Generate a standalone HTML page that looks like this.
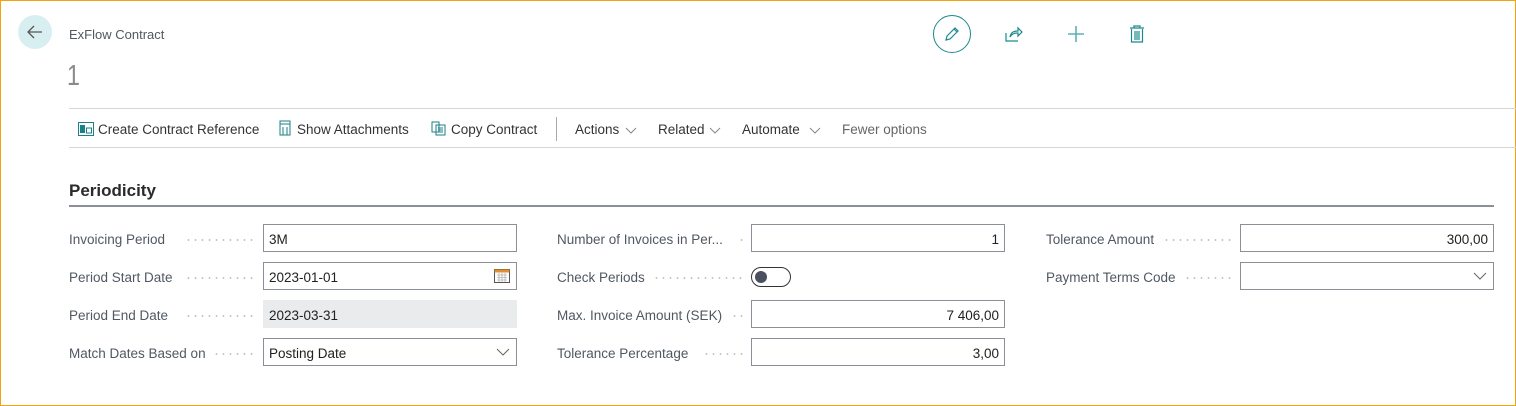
<!DOCTYPE html><html><head><style>
*{box-sizing:border-box;margin:0;padding:0}
body{width:1516px;height:406px;overflow:hidden;background:#fff;font-family:"Liberation Sans",sans-serif;position:relative}
.frame{position:absolute;left:0;top:0;width:1516px;height:406px;border:1px solid #f0a30a;}
.a{position:absolute;white-space:nowrap}
.lbl{font-size:13.5px;color:#505862}
.dots{position:absolute;height:2px;background-image:radial-gradient(circle,#c4c4c4 0.8px,transparent 1px);background-size:7px 2px;background-repeat:repeat-x}
.in{position:absolute;height:28px;border:1px solid #8a8f98;background:#fff;font-size:13.5px;color:#212121;padding:7px 5px 0;}
.tb{font-size:13.5px;color:#333;top:122px}
.hl{position:absolute;height:1px;background:#d6d6d6}
.chev{position:absolute;top:127px}
</style></head><body>
<div class="frame"></div>
<div class="a" style="left:18px;top:15px;width:34px;height:34px;border-radius:50%;background:#d8eff1"></div>
<svg class="a" style="left:25px;top:22px" width="20" height="20" viewBox="0 0 20 20"><path d="M17 10H3M9 4L3 10L9 16" stroke="#555" stroke-width="1.3" fill="none"/></svg>
<div class="a" style="left:69px;top:27px;font-size:13px;color:#505862">ExFlow Contract</div>
<div class="a" style="left:67px;top:60px;font-size:29px;font-weight:normal;color:#8a8a8a;transform:scaleX(0.8);transform-origin:left">1</div>
<div class="a" style="left:933px;top:15px;width:38px;height:38px;border:1.3px solid #1a8a8f;border-radius:50%"></div>
<svg class="a" style="left:942px;top:24px" width="20" height="20" viewBox="0 0 20 20"><path d="M4 16L5 12L13 4L16 7L8 15Z M12 5L15 8" stroke="#1a8a8f" stroke-width="1.2" fill="none"/></svg>
<svg class="a" style="left:1004px;top:24px" width="20" height="20" viewBox="0 0 20 20"><path d="M2 9V17H14M6 13C7 8 10 7 14 7V4L18 8L14 12V9C10 9 8 10 6 13Z" stroke="#1a8a8f" stroke-width="1.2" fill="none"/></svg>
<svg class="a" style="left:1066px;top:24px" width="20" height="20" viewBox="0 0 20 20"><path d="M10 2V18M2 10H18" stroke="#5fb0b5" stroke-width="1.6"/></svg>
<svg class="a" style="left:1128px;top:24px" width="18" height="20" viewBox="0 0 18 20"><path d="M2 4H16M6 4V2H12V4M3.5 5V18H14.5V5M7 7V16M9 7V16M11 7V16" stroke="#1a8a8f" stroke-width="1.2" fill="none"/></svg>
<div class="hl" style="left:69px;top:108px;width:1447px"></div>
<div class="hl" style="left:69px;top:147px;width:1447px"></div>
<svg class="a" style="left:78px;top:122px" width="16" height="14" viewBox="0 0 16 14"><rect x="0.5" y="0.5" width="15" height="13" stroke="#1a7f86" fill="none"/><rect x="2" y="3" width="5" height="8" fill="#1a7f86"/><rect x="8.5" y="6" width="5" height="5" stroke="#1a7f86" fill="none"/></svg>
<div class="a tb" style="left:98px">Create Contract Reference</div>
<svg class="a" style="left:279px;top:120px" width="12" height="16" viewBox="0 0 12 16"><path d="M1 1H11V15H1Z M1 4H11 M4 7V15 M8 7V15" stroke="#1a7f86" fill="none"/></svg>
<div class="a tb" style="left:297px">Show Attachments</div>
<svg class="a" style="left:431px;top:121px" width="16" height="15" viewBox="0 0 16 15"><path d="M1 1H8V11H1Z M5 4H14V14H5Z M7 7H12M7 9H12M7 11H12" stroke="#1a7f86" fill="#fff"/></svg>
<div class="a tb" style="left:451px">Copy Contract</div>
<div class="a" style="left:556px;top:117px;width:1px;height:24px;background:#aaa"></div>
<div class="a tb" style="left:575px">Actions</div>
<svg class="chev" style="left:625px" width="12" height="7" viewBox="0 0 12 7"><path d="M1 1L6 6L11 1" stroke="#888" fill="none"/></svg>
<div class="a tb" style="left:658px">Related</div>
<svg class="chev" style="left:709px" width="12" height="7" viewBox="0 0 12 7"><path d="M1 1L6 6L11 1" stroke="#888" fill="none"/></svg>
<div class="a tb" style="left:742px">Automate</div>
<svg class="chev" style="left:809px" width="12" height="7" viewBox="0 0 12 7"><path d="M1 1L6 6L11 1" stroke="#888" fill="none"/></svg>
<div class="a tb" style="left:842px;color:#666">Fewer options</div>
<div class="a" style="left:69px;top:181px;font-size:17px;font-weight:bold;color:#2b2b2b">Periodicity</div>
<div class="a" style="left:69px;top:205px;width:1425px;height:2px;background:#8a8f98"></div>

<div class="a lbl" style="left:69px;top:232px">Invoicing Period</div><div class="dots" style="left:185px;top:239px;width:70px"></div>
<div class="in" style="left:263px;top:224px;width:254px">3M</div>
<div class="a lbl" style="left:69px;top:270px">Period Start Date</div><div class="dots" style="left:185px;top:277px;width:70px"></div>
<div class="in" style="left:263px;top:262px;width:254px">2023-01-01</div>
<svg class="a" style="left:494px;top:269px" width="16" height="14" viewBox="0 0 16 14"><rect x="0.5" y="0.5" width="15" height="13" stroke="#555" fill="none"/><rect x="0.5" y="0.5" width="15" height="3" fill="#e09030"/><path d="M3 6H13M3 8.5H13M3 11H13M5 4V13M8 4V13M11 4V13" stroke="#999" stroke-width="0.6"/></svg>
<div class="a lbl" style="left:69px;top:308px">Period End Date</div><div class="dots" style="left:185px;top:315px;width:70px"></div>
<div class="in" style="left:263px;top:300px;width:254px;background:#eaebec;border-color:#eaebec">2023-03-31</div>
<div class="a lbl" style="left:69px;top:346px">Match Dates Based on</div><div class="dots" style="left:213px;top:353px;width:42px"></div>
<div class="in" style="left:263px;top:338px;width:254px">Posting Date</div>
<svg class="a" style="left:496px;top:348px" width="14" height="8" viewBox="0 0 14 8"><path d="M1 1L7 7L13 1" stroke="#666" fill="none"/></svg>

<div class="a lbl" style="left:557px;top:232px">Number of Invoices in Per...</div><div class="dots" style="left:738px;top:239px;width:6px"></div>
<div class="in" style="left:751px;top:224px;width:254px;text-align:right">1</div>
<div class="a lbl" style="left:557px;top:270px">Check Periods</div><div class="dots" style="left:653px;top:277px;width:91px"></div>
<div class="a" style="left:751px;top:267px;width:40px;height:20px;border:1.3px solid #333;border-radius:10px"></div>
<div class="a" style="left:755px;top:271px;width:12px;height:12px;border-radius:50%;background:#4a5060"></div>
<div class="a lbl" style="left:557px;top:308px">Max. Invoice Amount (SEK)</div><div class="dots" style="left:731px;top:315px;width:13px"></div>
<div class="in" style="left:751px;top:300px;width:254px;text-align:right">7 406,00</div>
<div class="a lbl" style="left:557px;top:346px">Tolerance Percentage</div><div class="dots" style="left:703px;top:353px;width:41px"></div>
<div class="in" style="left:751px;top:338px;width:254px;text-align:right">3,00</div>

<div class="a lbl" style="left:1046px;top:232px">Tolerance Amount</div><div class="dots" style="left:1163px;top:239px;width:70px"></div>
<div class="in" style="left:1240px;top:224px;width:254px;text-align:right">300,00</div>
<div class="a lbl" style="left:1046px;top:270px">Payment Terms Code</div><div class="dots" style="left:1184px;top:277px;width:49px"></div>
<div class="in" style="left:1240px;top:262px;width:254px"></div>
<svg class="a" style="left:1473px;top:272px" width="14" height="8" viewBox="0 0 14 8"><path d="M1 1L7 7L13 1" stroke="#666" fill="none"/></svg>
</body></html>
